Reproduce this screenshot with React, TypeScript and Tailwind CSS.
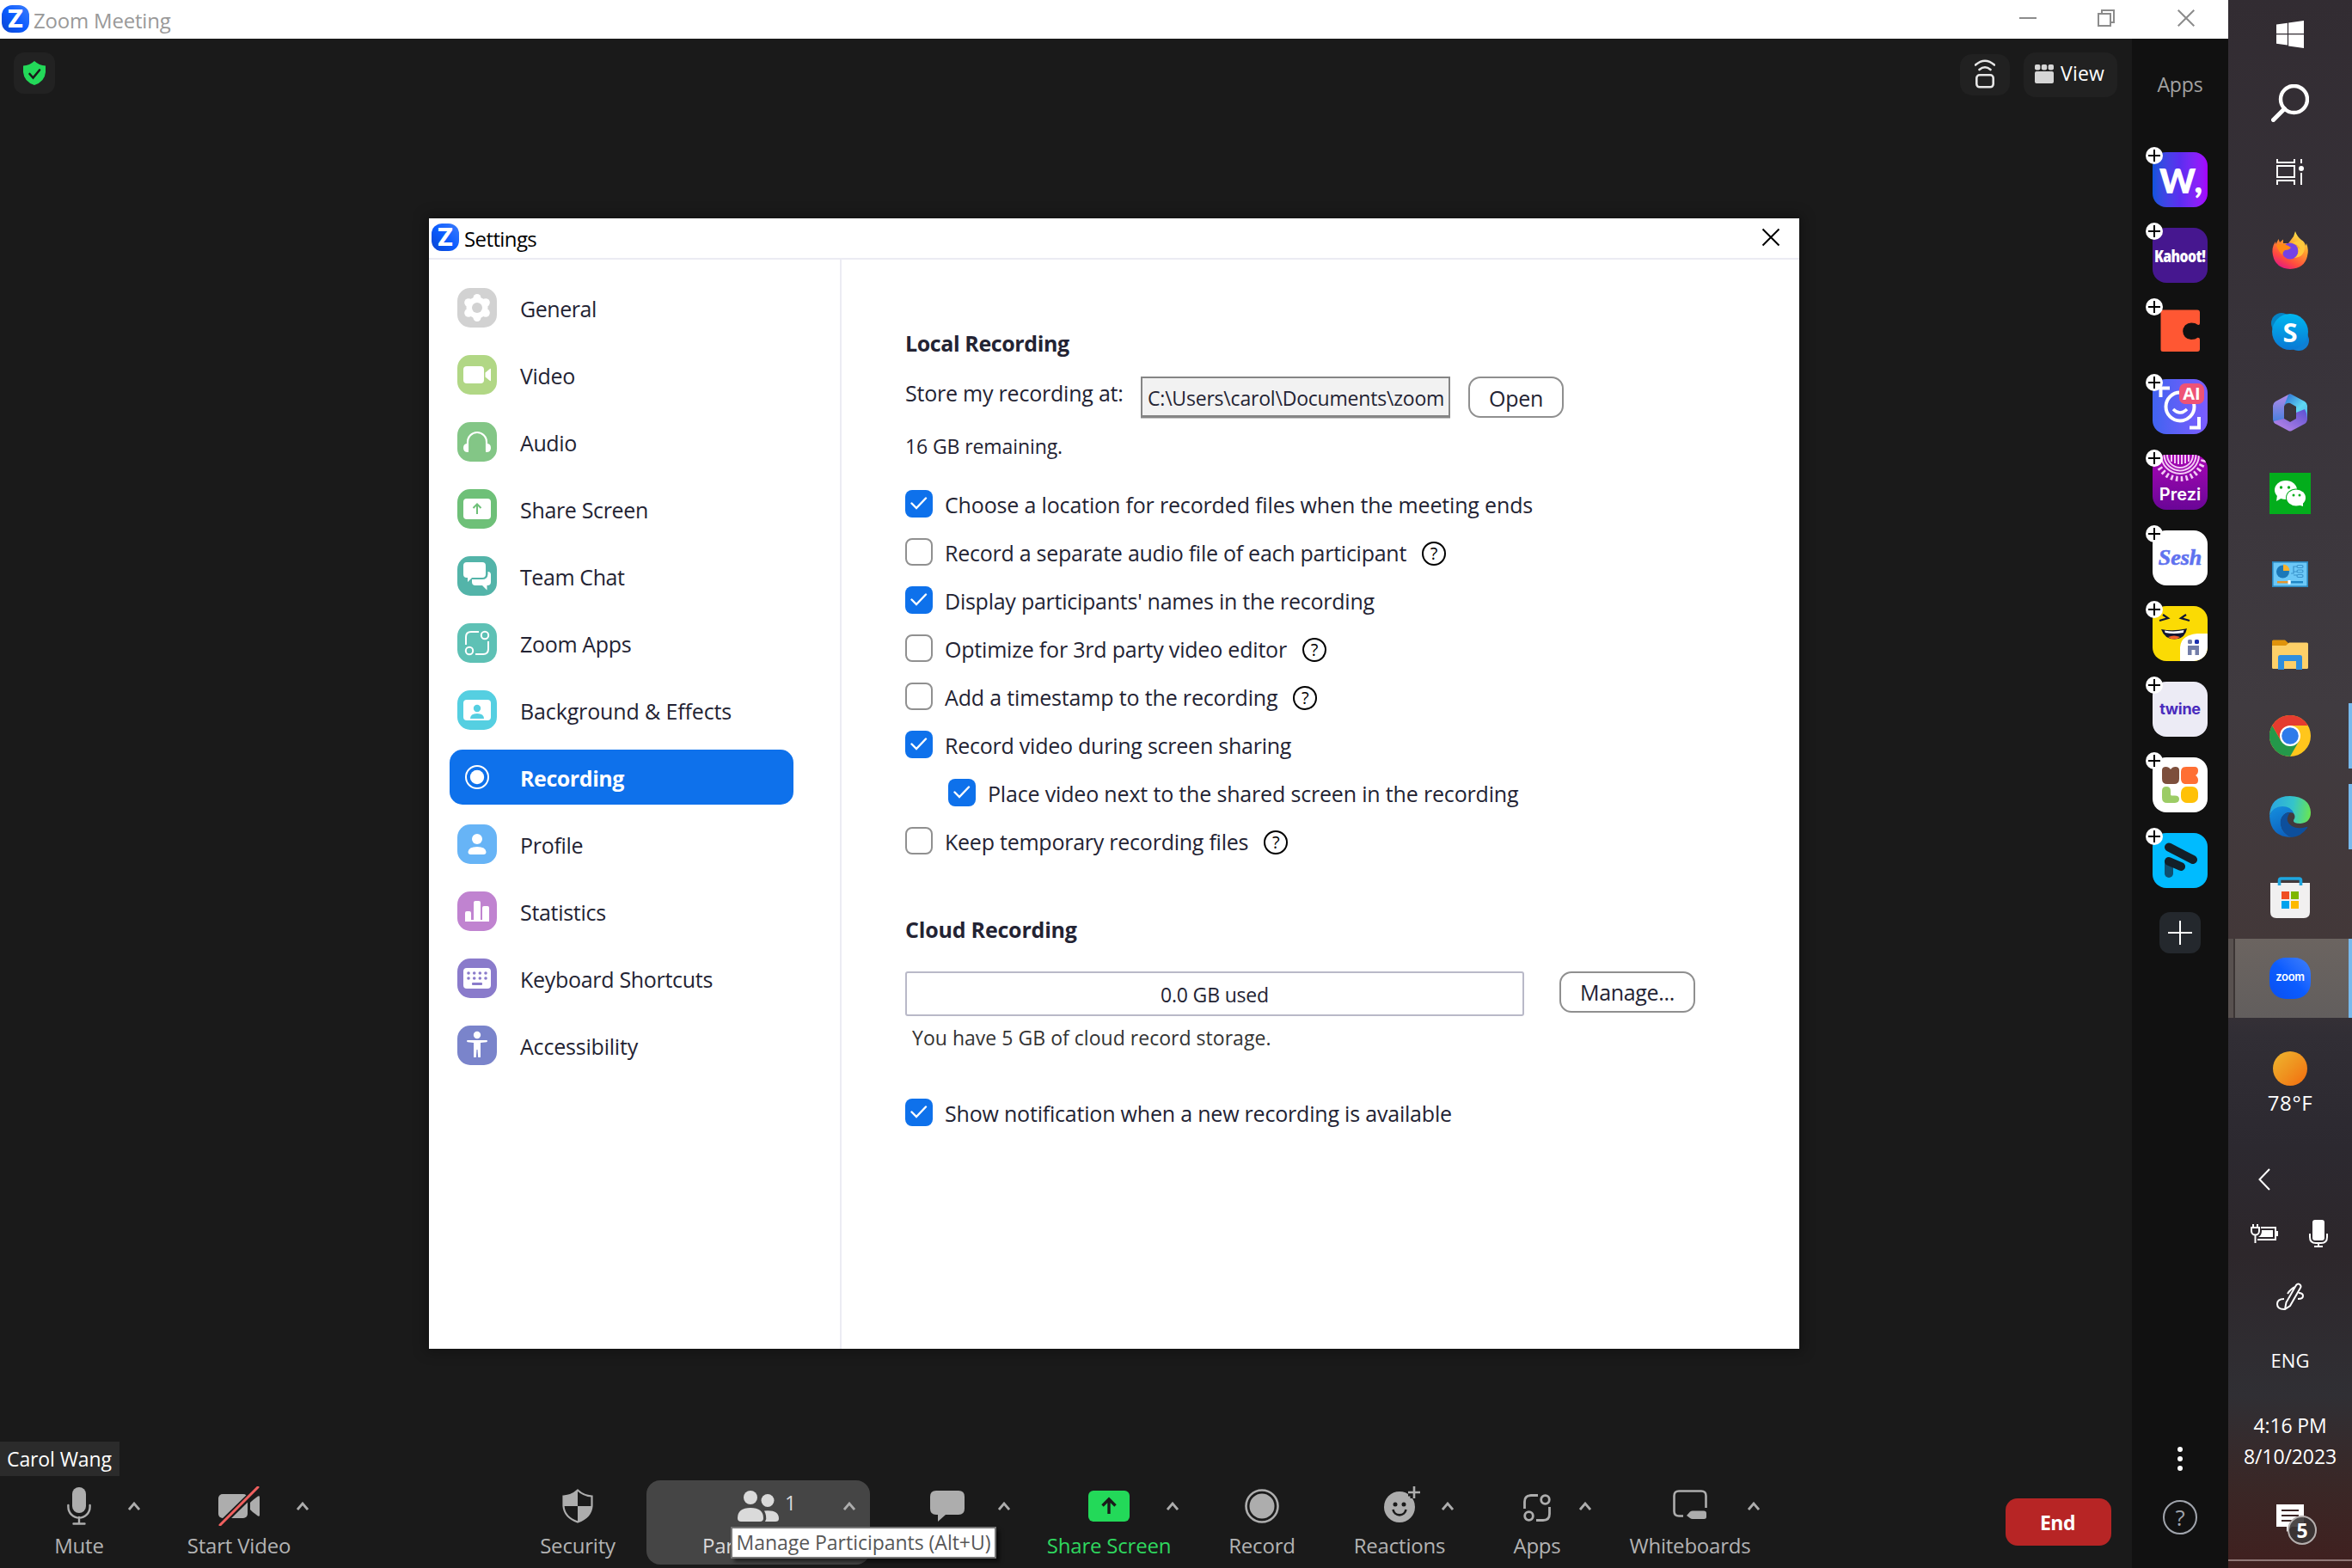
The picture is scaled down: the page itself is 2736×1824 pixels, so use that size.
import React from "react";
import type { ReactNode } from "react";

/* ---------- shared bits ---------- */

function ZoomLogo({ className = "" }: { className?: string }) {
  return (
    <div
      className={
        "flex h-8 w-8 shrink-0 items-center justify-center rounded-[12px] bg-gradient-to-bl from-[#3b7dfb] via-[#0b5cff] to-[#0a44d0] text-[28px] leading-none font-extrabold text-white [font-family:Inter,sans-serif] " +
        className
      }
    >
      Z
    </div>
  );
}

function Caret() {
  return (
    <svg width="14" height="10" viewBox="0 0 14 10" fill="none" stroke="#adadad" strokeWidth="2.8">
      <path d="M1 9 7 2 13 9" />
    </svg>
  );
}

/* ---------- settings: sidebar ---------- */

const settingsItems: { label: string; tile: string; ls: string; icon: ReactNode }[] = [
  {
    label: "General",
    tile: "bg-[#d2d2d2]",
    ls: "tracking-[-0.45px]",
    icon: (
      <>
        <g fill="#fff">
          <circle cx="23" cy="23" r="12.5" />
          <circle cx="23" cy="11.500" r="4.500" />
          <circle cx="23" cy="34.500" r="4.500" />
          <circle cx="13" cy="17" r="4.800" />
          <circle cx="33" cy="17" r="4.800" />
          <circle cx="13" cy="29" r="4.800" />
          <circle cx="33" cy="29" r="4.800" />
        </g>
        <circle cx="23" cy="23" r="6" fill="#d2d2d2" />
      </>
    ),
  },
  {
    label: "Video",
    tile: "bg-[#b1d785]",
    ls: "tracking-[-0.3px]",
    icon: (
      <g fill="#fff">
        <rect x="7" y="13" width="24" height="20" rx="4" />
        <path d="M32.500 20.500 38 16q1-.5 1 .5v13q0 1-1 .5l-5.500-4.500z" />
      </g>
    ),
  },
  {
    label: "Audio",
    tile: "bg-[#83c686]",
    ls: "tracking-[-0.4px]",
    icon: (
      <>
        <path d="M12 33V23a11 11 0 0 1 22 0v10" fill="none" stroke="#fff" strokeWidth="2.200" />
        <path d="M13 25v10q-6 .5-6-5t6-5zM33 25v10q6 .5 6-5t-6-5z" fill="#fff" />
      </>
    ),
  },
  {
    label: "Share Screen",
    tile: "bg-[#6ec078]",
    ls: "tracking-[-0.33px]",
    icon: (
      <>
        <rect x="7" y="11" width="32" height="24" rx="4" fill="#fff" />
        <path d="M23 29V18M18.500 22 23 17.500 27.500 22" fill="none" stroke="#6ec078" strokeWidth="2" />
      </>
    ),
  },
  {
    label: "Team Chat",
    tile: "bg-[#53b4a9]",
    ls: "tracking-[-0.4px]",
    icon: (
      <>
        <path d="M11 7h18q4 0 4 4v10q0 4-4 4H17l-5 5v-5h-1q-4 0-4-4V11q0-4 4-4z" fill="#fff" />
        <path d="M35.500 18q3.500 0 3.500 3.500V30q0 4-4 4h-.5v5.500L29 34h-8q-4 0-4-4v-3h12q6 0 6.500-6z" fill="#fff" />
      </>
    ),
  },
  {
    label: "Zoom Apps",
    tile: "bg-[#5ec1b5]",
    ls: "tracking-[-0.33px]",
    icon: (
      <g fill="none" stroke="#fff" strokeWidth="2">
        <path d="M10 25v-9q0-6 6-6h9M36 21v9q0 6-6 6h-9" />
        <circle cx="32" cy="14" r="4.200" />
        <circle cx="14" cy="32" r="4.200" />
      </g>
    ),
  },
  {
    label: "Background & Effects",
    tile: "bg-[#55cfe1]",
    ls: "tracking-[-0.13px]",
    icon: (
      <>
        <rect x="7" y="11" width="32" height="24" rx="4" fill="#fff" />
        <circle cx="23" cy="21" r="4.200" fill="#55cfe1" />
        <path d="M15 33q0-6 8-6t8 6z" fill="#55cfe1" />
      </>
    ),
  },
  {
    label: "Recording",
    tile: "bg-transparent",
    ls: "tracking-[-0.44px]",
    icon: (
      <>
        <circle cx="23" cy="23" r="13" fill="none" stroke="#fff" strokeWidth="2" />
        <circle cx="23" cy="23" r="8.200" fill="#fff" />
      </>
    ),
  },
  {
    label: "Profile",
    tile: "bg-[#67b4f6]",
    ls: "tracking-[-0.3px]",
    icon: (
      <g fill="#fff">
        <circle cx="23" cy="17" r="6" />
        <path d="M12.500 32q.5-6 10.500-6t10.500 6q0 3-3 3h-15q-3 0-3-3z" />
      </g>
    ),
  },
  {
    label: "Statistics",
    tile: "bg-[#c083d0]",
    ls: "tracking-[-0.3px]",
    icon: (
      <path
        d="M9 35V25q0-2 2-2h3q2 0 2 2v8h3V13q0-2 2-2h4q2 0 2 2v20h2V19q0-2 2-2h4q2 0 2 2v16z"
        fill="#fff"
      />
    ),
  },
  {
    label: "Keyboard Shortcuts",
    tile: "bg-[#8a7bcb]",
    ls: "tracking-[-0.3px]",
    icon: (
      <>
        <rect x="7" y="11" width="32" height="24" rx="4" fill="#fff" />
        <g fill="#8a7bcb">
          {[13, 19.700, 26.300, 33].map((x) => (
            <React.Fragment key={x}>
              <circle cx={x} cy="17" r="1.800" />
              <circle cx={x} cy="23" r="1.800" />
            </React.Fragment>
          ))}
          <rect x="17" y="28" width="12" height="3" rx="1" />
        </g>
      </>
    ),
  },
  {
    label: "Accessibility",
    tile: "bg-[#7a84cb]",
    ls: "tracking-[-0.2px]",
    icon: (
      <g fill="#fff">
        <circle cx="23" cy="11" r="4.200" />
        <path d="M12 17h22q1 0 1 1t-1 1.200l-7 .8v17h-2.800L23.500 28h-1L21.800 37H19V20l-7-.8q-1-.2-1-1.200t1-1z" />
      </g>
    ),
  },
];

/* ---------- settings: content ---------- */

function Checkbox({ checked }: { checked: boolean }) {
  return checked ? (
    <div className="flex h-8 w-8 shrink-0 items-center justify-center rounded-[8px] bg-[#0e71eb]">
      <svg width="20" height="16" viewBox="0 0 20 16" fill="none" stroke="#fff" strokeWidth="2.400">
        <path d="M1.500 7.500 7 13 18 1.500" strokeLinecap="round" />
      </svg>
    </div>
  ) : (
    <div className="h-8 w-8 shrink-0 rounded-[8px] border-2 border-[#909090] bg-white" />
  );
}

function Help() {
  return (
    <div className="mt-1 ml-[18px] flex h-7 w-7 items-center justify-center rounded-full border-2 border-black text-[20px] leading-none text-black">
      ?
    </div>
  );
}

const options: { text: string; on?: boolean; help?: boolean; nested?: boolean; ls: string }[] = [
  { text: "Choose a location for recorded files when the meeting ends", on: true, ls: "tracking-[-0.16px]" },
  { text: "Record a separate audio file of each participant", help: true, ls: "tracking-[-0.26px]" },
  { text: "Display participants' names in the recording", on: true, ls: "tracking-[-0.25px]" },
  { text: "Optimize for 3rd party video editor", help: true, ls: "tracking-[-0.2px]" },
  { text: "Add a timestamp to the recording", help: true, ls: "tracking-[-0.16px]" },
  { text: "Record video during screen sharing", on: true, ls: "tracking-[-0.24px]" },
  { text: "Place video next to the shared screen in the recording", on: true, nested: true, ls: "tracking-[-0.17px]" },
  { text: "Keep temporary recording files", help: true, ls: "tracking-[-0.24px]" },
];

function Option({ o }: { o: (typeof options)[number] }) {
  return (
    <div className={"flex h-14 items-center " + (o.nested ? "ml-[50px]" : "")}>
      <Checkbox checked={!!o.on} />
      <div className={"ml-[14px] pt-[1px] text-[25px] leading-9 whitespace-nowrap " + o.ls}>{o.text}</div>
      {o.help && <Help />}
    </div>
  );
}

function SettingsDialog() {
  return (
    <div className="absolute top-[254px] left-[499px] flex h-[1315px] w-[1594px] flex-col bg-white text-[#232333] shadow-[0_0_14px_4px_rgba(0,0,0,0.28)]">
      <div className="flex h-12 shrink-0 items-center border-b-2 border-[#ebebf3] pr-[22px] pl-[3px]">
        <ZoomLogo className="mb-[2px]" />
        <div className="mt-[1px] ml-[6px] text-[24px] leading-8 tracking-[-0.6px] text-black">Settings</div>
        <svg className="mt-[-2px] ml-auto" width="22" height="22" viewBox="0 0 22 22" stroke="#000" strokeWidth="2">
          <path d="M1.500 1.500 20.500 20.500M20.500 1.500 1.500 20.500" />
        </svg>
      </div>
      <div className="flex flex-1">
        <div className="flex w-[480px] flex-col gap-[14px] border-r-2 border-[#ebebf3] pt-6 pl-6">
          {settingsItems.map((it) => {
            const active = it.label === "Recording";
            return (
              <div
                key={it.label}
                className={
                  "flex h-16 w-[400px] items-center rounded-[15px] pl-[9px] " +
                  (active ? "bg-[#0e71eb] font-bold text-white" : "")
                }
              >
                <div className={"h-[46px] w-[46px] rounded-[15px] " + it.tile}>
                  <svg width="46" height="46" viewBox="0 0 46 46">
                    {it.icon}
                  </svg>
                </div>
                <div className={"ml-[27px] pt-[1px] text-[25px] leading-9 whitespace-nowrap " + it.ls}>{it.label}</div>
              </div>
            );
          })}
        </div>
        <div className="flex flex-1 flex-col pt-[79px] pl-[74px]">
          <div className="text-[25px] leading-9 font-bold tracking-[-0.4px]">Local Recording</div>
          <div className="mt-[21px] flex h-12">
            <div className="w-[274px] pt-[1px] text-[25px] leading-9 tracking-[-0.22px] whitespace-nowrap">
              Store my recording at:
            </div>
            <div className="flex h-12 w-[360px] items-center overflow-hidden border-2 border-b-[3px] border-[#858585] bg-[#f2f2f2] pt-[3px] pl-[6px] text-[23px] tracking-[-0.2px] whitespace-nowrap shadow-[0_1px_0_#c4c4c4]">
              C:\Users\carol\Documents\zoom
            </div>
            <div className="ml-[21px] flex h-12 w-[111px] items-center justify-center rounded-[14px] border-2 border-[#8f8f8f] pt-[3px] text-[25px] tracking-[-0.28px]">
              Open
            </div>
          </div>
          <div className="mt-[17px] text-[23px] leading-8 tracking-[-0.1px]">16 GB remaining.</div>
          <div className="mt-[23px] flex flex-col">
            {options.map((o) => (
              <Option key={o.text} o={o} />
            ))}
          </div>
          <div className="mt-[57px] text-[25px] leading-9 font-bold tracking-[-0.2px]">Cloud Recording</div>
          <div className="mt-[31px] flex">
            <div className="flex h-[52px] w-[720px] items-center justify-center rounded-[3px] border-2 border-[#b9b9c8] pt-[2px] text-[23px] tracking-[-0.18px]">
              0.0 GB used
            </div>
            <div className="ml-[41px] flex h-12 w-[158px] items-center justify-center rounded-[14px] border-2 border-[#8f8f8f] pt-[1px] text-[25px] tracking-[-0.32px]">
              Manage...
            </div>
          </div>
          <div className="mt-[9px] ml-2 text-[23px] leading-8 tracking-[0.03px] text-[#333]">
            You have 5 GB of cloud record storage.
          </div>
          <div className="mt-[43px]">
            <Option
              o={{ text: "Show notification when a new recording is available", on: true, ls: "tracking-[-0.2px]" }}
            />
          </div>
        </div>
      </div>
    </div>
  );
}

/* ---------- meeting toolbar ---------- */

function Tool({
  icon,
  label,
  box,
  tone = "text-[#b3b3b3]",
  caret = true,
  badge,
}: {
  icon: ReactNode;
  label?: string;
  box: string;
  tone?: string;
  caret?: boolean;
  badge?: string;
}) {
  return (
    <div className={"flex shrink-0 " + tone}>
      <div className={"flex flex-col items-center " + box}>
        <div className="relative flex h-[60px] items-center justify-center">
          {icon}
          {badge && <span className="absolute top-[10px] left-[55px] text-[23px] leading-8">{badge}</span>}
        </div>
        {label && <div className="text-[24px] leading-8 tracking-[-0.2px] whitespace-nowrap">{label}</div>}
      </div>
      {caret && (
        <div className="flex h-[60px] items-center">
          <Caret />
        </div>
      )}
    </div>
  );
}

const G = "#adadad";

function Toolbar() {
  return (
    <div className="flex h-[98px] items-start">
      <Tool
        box="ml-[35px] w-[114px]"
        label="Mute"
        icon={
          <svg width="28" height="44" viewBox="0 0 28 44" fill="none" stroke={G} strokeWidth="2.400">
            <rect x="6" y="0" width="16" height="30" rx="8" fill={G} stroke="none" />
            <path d="M1.400 21v2a12.600 12.600 0 0 0 25.200 0v-2M14 35v7M7.500 42.500h13" strokeLinecap="round" />
          </svg>
        }
      />
      <Tool
        box="ml-[48px] w-[134px]"
        label="Start Video"
        icon={
          <svg width="48" height="46" viewBox="0 0 48 46">
            <rect x="0" y="9" width="34" height="28" rx="5" fill={G} />
            <path d="M37 19q1-1.500 9-7.500 2-1 2 1v21q0 2-2 1-8-6-9-7.500z" fill={G} />
            <path d="M2 45 46 2" stroke="#1a1a1a" strokeWidth="7" />
            <path d="M2 45 46 1" stroke="#f0605f" strokeWidth="3" strokeLinecap="round" />
          </svg>
        }
      />
      <Tool
        box="ml-[253px] w-[120px]"
        label="Security"
        caret={false}
        icon={
          <svg width="36" height="40" viewBox="0 0 36 40">
            <path
              d="M18 1.500q7 6.500 16.500 7V20q-1 13-16.500 18.500Q2.500 33 1.500 20V8.500Q11 8 18 1.500z"
              fill="none"
              stroke={G}
              strokeWidth="2.200"
            />
            <path d="M18 1.500V20H1.500V8.500Q11 8 18 1.500zM18 20h16.500q-1 13-16.500 18.500z" fill={G} />
          </svg>
        }
      />
      <div className="ml-5 flex h-[98px] w-[260px] rounded-[16px] bg-[#454545] pl-[31px]">
        <Tool
          box="w-[198px]"
          label="Participants"
          badge="1"
          tone="text-[#dadada]"
          icon={
            <svg width="48" height="36" viewBox="0 0 48 36" fill="#dadada">
              <circle cx="15" cy="8" r="8" />
              <circle cx="35" cy="11.500" r="7.500" />
              <path d="M0 32Q0 20 15 20t15 12q0 4-4 4H4q-4 0-4-4z" />
              <path d="M31 23.500q17-1.500 17 9 0 3.500-4 3.500H32q2-3 1-7-.5-3-2-5.500z" />
            </svg>
          }
        />
      </div>
      <Tool
        box="ml-[31px] w-[118px]"
        icon={
          <svg width="40" height="36" viewBox="0 0 40 36" fill={G}>
            <path d="M7 0h26q7 0 7 7v14q0 7-7 7H18l-9 8v-8H7q-7 0-7-7V7q0-7 7-7z" />
          </svg>
        }
      />
      <Tool
        box="ml-[48px] w-[134px]"
        label="Share Screen"
        tone="text-[#2fd85f] tracking-tight"
        icon={
          <svg width="48" height="36" viewBox="0 0 48 36">
            <rect width="48" height="36" rx="6" fill="#23d959" />
            <path d="M24 27V11M16.500 17.500 24 10l7.500 7.500" fill="none" stroke="#1a1a1a" strokeWidth="3.400" />
          </svg>
        }
      />
      <Tool
        box="ml-[57px] w-[80px]"
        label="Record"
        caret={false}
        icon={
          <svg width="40" height="40" viewBox="0 0 40 40">
            <circle cx="20" cy="20" r="18.500" fill="none" stroke={G} strokeWidth="2.600" />
            <circle cx="20" cy="20" r="14.500" fill={G} />
          </svg>
        }
      />
      <Tool
        box="ml-[71px] w-[98px]"
        label="Reactions"
        icon={
          <svg className="mt-[-5px] ml-[6px]" width="42" height="42" viewBox="0 0 42 42">
            <circle cx="18" cy="24" r="18" fill={G} />
            <path d="M35 0v14M28 7h14" stroke="#1a1a1a" strokeWidth="9" />
            <path d="M35 0v14M28 7h14" stroke={G} strokeWidth="2.600" />
            <g fill="#1a1a1a">
              <circle cx="13" cy="21" r="2.500" />
              <circle cx="23" cy="21" r="2.500" />
            </g>
            <path d="M10.500 27a7.600 7.600 0 0 0 15 0" fill="none" stroke="#1a1a1a" strokeWidth="2.600" />
          </svg>
        }
      />
      <Tool
        box="ml-[48px] w-[98px]"
        label="Apps"
        icon={
          <svg className="mt-1" width="32" height="32" viewBox="0 0 32 32" fill="none" stroke={G} strokeWidth="2.800">
            <path d="M1.500 17V9q0-7.500 7.500-7.500h8M30.500 15v8q0 7.500-7.500 7.500h-8" />
            <circle cx="25.500" cy="6.500" r="4.800" />
            <circle cx="6.500" cy="25.500" r="4.800" />
          </svg>
        }
      />
      <Tool
        box="ml-[48px] w-[134px]"
        label="Whiteboards"
        icon={
          <svg className="mt-[-4px]" width="40" height="34" viewBox="0 0 40 34">
            <path d="M38.500 21V7q0-5.500-5.500-5.500H7Q1.500 1.500 1.500 7v18q0 5.500 5.500 5.500h5" fill="none" stroke={G} strokeWidth="2.600" />
            <path d="M16 30l4-4.500q1.500-1 3-1h13q3 0 3 3v4q0 2.500-3 2.500H23q-2 0-3-1z" fill={G} />
          </svg>
        }
      />
      <div className="mt-[21px] ml-[286px] flex h-[55px] w-[123px] items-center justify-center rounded-[14px] bg-[#b72525] pt-[1px] pr-[2px] text-[23px] font-bold tracking-[-0.5px] text-white">
        End
      </div>
    </div>
  );
}

/* ---------- Zoom apps column ---------- */

const appTiles: { name: string; tile: string; art: ReactNode }[] = [
  {
    name: "wonder",
    tile: "bg-gradient-to-r from-[#0b53dc] via-[#5b2df0] to-[#a400fd]",
    art: <span className="pt-[2px] pl-[2px] text-[40px] leading-none font-extrabold text-white [font-family:Lato,sans-serif]">W,</span>,
  },
  {
    name: "kahoot",
    tile: "bg-[#46178f]",
    art: (
      <span className="scale-x-[0.88] scale-y-[1.1] text-[18px] leading-none font-extrabold tracking-[-0.7px] text-white">
        Kahoot!
      </span>
    ),
  },
  {
    name: "coda",
    tile: "bg-transparent",
    art: (
      <svg width="64" height="64" viewBox="0 0 64 64">
        <path
          d="M12 7.500h40q3 0 3 3V23q0 2.500-2.500 1.800Q50 22.500 45 22.500a9.800 9.800 0 0 0 0 19.600q5 0 7.500-2.400Q55 39.500 55 42v11q0 3-3 3H12q-2.500 0-2.500-2.500V10q0-2.500 2.500-2.500z"
          fill="#ff5733"
        />
      </svg>
    ),
  },
  {
    name: "ai",
    tile: "bg-gradient-to-r from-[#3f63f0] to-[#7a5cff]",
    art: (
      <>
        <svg width="64" height="64" viewBox="0 0 64 64" fill="none" stroke="#fff" strokeWidth="4">
          <path d="M9.500 21V10.500H20M54 44v12.500H43" />
          <circle cx="32" cy="32" r="16.500" />
          <path d="M24 35q8 8 16 0" strokeWidth="3.500" />
        </svg>
        <span className="absolute top-[5px] right-[4px] flex h-6 w-[29px] items-center justify-center rounded-[7px] bg-[#ee5376] text-[20px] leading-none font-bold text-white">
          AI
        </span>
      </>
    ),
  },
  {
    name: "prezi",
    tile: "bg-gradient-to-b from-[#a800b4] to-[#6a0597]",
    art: (
      <>
        <svg className="absolute inset-0" width="64" height="64" viewBox="0 0 64 64" fill="none" stroke="#f3c9f5">
          <circle cx="32" cy="0" r="28" strokeWidth="6" strokeDasharray="2.600 3.200" />
          <circle cx="32" cy="0" r="22" strokeWidth="2" />
          <circle cx="32" cy="0" r="18.500" strokeWidth="2" />
          <circle cx="32" cy="0" r="15" strokeWidth="2" />
          <path d="M22 0v8M26 0v10M30 0v11M34 0v11M38 0v10M42 0v8" strokeWidth="2" />
        </svg>
        <span className="mt-[27px] text-[20px] leading-none font-semibold text-white [font-family:Inter,sans-serif]">Prezi</span>
      </>
    ),
  },
  {
    name: "sesh",
    tile: "bg-white",
    art: (
      <span className="text-[26px] leading-none font-bold text-[#5f72ef] italic [-webkit-text-stroke:0.6px_#5f72ef] [font-family:'Liberation_Serif',serif]">
        Sesh
      </span>
    ),
  },
  {
    name: "laugh",
    tile: "bg-[#fbdb04]",
    art: (
      <svg width="64" height="64" viewBox="0 0 64 64">
        <g fill="none" stroke="#111633" strokeWidth="2.200">
          <path d="M12 10l6 4-10 3M39 10l-6 4 10 3" />
        </g>
        <path d="M10 27q15 3 30-1-2 12-14.500 12.500Q14 38.500 10 27z" fill="#111633" />
        <path d="M14 28.500q11 2 22.500-.5l-.8 3q-11 2-21 0z" fill="#fff" />
        <path d="M18 36q7-3 14 0-3 2.500-7 2.500T18 36z" fill="#f0622d" />
        <path d="M32 64V48q1-14 20-16h12v16q0 16-16 16z" fill="#fff" />
        <g fill="#727da8">
          <rect x="41" y="39" width="5" height="5" rx="1.500" />
          <path d="M41 46h13v11h-4.500v-6h-4v6H41z" />
        </g>
        <rect x="49" y="39" width="5" height="5" rx="1.500" fill="#1a2fb0" />
      </svg>
    ),
  },
  {
    name: "twine",
    tile: "bg-[#ecebf5]",
    art: <span className="text-[18px] leading-none font-bold tracking-[-0.3px] text-[#4a2bbd] [font-family:Inter,sans-serif]">twine</span>,
  },
  {
    name: "blocks",
    tile: "bg-white",
    art: (
      <svg width="64" height="64" viewBox="0 0 64 64">
        <path d="M11 15q0-4 4.500-4 3.500 0 5.500 3 2-3 5.500-3 4.500 0 4.500 4v10q0 6-6 6h-8q-6 0-6-6z" fill="#7d4f3c" />
        <path d="M39 11h10q4 0 4 4.500 0 3.500-3 5.500 3 2 3 5.500 0 4.500-4 4.500H39q-6 0-6-6v-8q0-6 6-6z" fill="#ff6f33" />
        <path d="M16 34q5 0 5 5v4q0 1.500 1.500 1.500H26q5 0 5 4t-5 4.500h-9q-6 0-6-6v-8q0-5 5-5z" fill="#9ccc65" />
        <rect x="33" y="34" width="20" height="19" rx="7" fill="#ffc107" />
      </svg>
    ),
  },
  {
    name: "bars",
    tile: "bg-[#00bbff]",
    art: (
      <svg width="64" height="64" viewBox="0 0 64 64" strokeLinecap="round" strokeWidth="10" fill="none">
        <path d="M19 34v13" stroke="#0f4f70" />
        <path d="M19 33l14 6" stroke="#131f28" />
        <path d="M19 16.500 47 31" stroke="#131f28" />
      </svg>
    ),
  },
];

function AppsColumn() {
  return (
    <div className="flex w-28 shrink-0 flex-col items-center bg-[#111] pt-[37px]">
      <div className="text-[23px] leading-8 tracking-[-0.1px] text-[#a2a2a2]">Apps</div>
      <div className="mt-[63px] flex flex-col gap-6">
        {appTiles.map((a) => (
          <div key={a.name} className="relative h-16 w-16">
            <div className={"relative flex h-16 w-16 items-center justify-center overflow-hidden rounded-[16px] " + a.tile}>
              {a.art}
            </div>
            <div className="absolute -top-[6px] -left-2 h-5 w-5 rounded-full bg-white">
              <svg width="20" height="20" viewBox="0 0 20 20" stroke="#000" strokeWidth="2">
                <path d="M10 3v14M3 10h14" />
              </svg>
            </div>
          </div>
        ))}
      </div>
      <div className="mt-7 flex h-12 w-12 items-center justify-center rounded-[12px] bg-[#24282d]">
        <svg width="28" height="28" viewBox="0 0 28 28" stroke="#fff" strokeWidth="2">
          <path d="M14 0v28M0 14h28" />
        </svg>
      </div>
      <div className="mt-auto flex flex-col gap-[5px]">
        <i className="h-[6px] w-[6px] rounded-full bg-white" />
        <i className="h-[6px] w-[6px] rounded-full bg-white" />
        <i className="h-[6px] w-[6px] rounded-full bg-white" />
      </div>
      <div className="mt-[34px] mb-[39px] flex h-10 w-10 items-center justify-center rounded-full border-2 border-[#a0a4ac] text-[26px] leading-none text-[#a0a4ac]">
        ?
      </div>
    </div>
  );
}

/* ---------- Windows taskbar ---------- */

const pinned: { name: string; bar?: boolean; active?: boolean; art: ReactNode }[] = [
  {
    name: "firefox",
    art: (
      <svg className="mt-[-3px]" width="44" height="46" viewBox="0 0 44 46">
        <defs>
          <linearGradient id="ff" x1="0.800" y1="0" x2="0.250" y2="1">
            <stop offset="0" stopColor="#fff14f" />
            <stop offset="0.400" stopColor="#ff9a2e" />
            <stop offset="0.750" stopColor="#ff4a3f" />
            <stop offset="1" stopColor="#e31587" />
          </linearGradient>
        </defs>
        <path
          d="M28 1q2 6 7 10 4 2 5 7l1-3q3 8 1 15-3 14-20 15Q5 44 2 29q-2-9 3-16l.5 3 3-6 1.500 4 4-3.500V15h6L26 7z"
          fill="url(#ff)"
        />
        <circle cx="22" cy="24" r="9.500" fill="#7542e5" />
        <path d="M6 17q6-3 14 1l3 2q-2 3-7 3-3 2-2.500 6-5-4-7.500-12z" fill="#ff8a16" />
        <path d="M24 15q7 0 10 7l-3-2q2 8-4 12 12-1 12-13-1-5-5-8z" fill="#ffc83c" />
      </svg>
    ),
  },
  {
    name: "skype",
    art: (
      <div className="relative flex h-11 w-11 items-center justify-center">
        <svg className="absolute inset-0" width="44" height="44" viewBox="0 0 44 44">
          <defs>
            <linearGradient id="sk" x1="0" y1="0" x2="0" y2="1">
              <stop offset="0" stopColor="#00b7f0" />
              <stop offset="1" stopColor="#0a78d4" />
            </linearGradient>
          </defs>
          <circle cx="12" cy="12" r="12" fill="#0583c4" />
          <circle cx="32" cy="32" r="12" fill="#0f7fd4" />
          <circle cx="22" cy="22" r="21" fill="url(#sk)" />
        </svg>
        <span className="relative text-[31px] leading-none font-bold text-white">S</span>
      </div>
    ),
  },
  {
    name: "microsoft 365",
    art: (
      <svg width="40" height="44" viewBox="0 0 40 44">
        <defs>
          <linearGradient id="m1" x1="0" y1="0" x2="0" y2="1">
            <stop offset="0" stopColor="#b48be8" />
            <stop offset="1" stopColor="#3f7fdc" />
          </linearGradient>
          <linearGradient id="m2" x1="0" y1="0" x2="1" y2="1">
            <stop offset="0" stopColor="#2a6bd4" />
            <stop offset="0.600" stopColor="#5fd8f2" />
            <stop offset="1" stopColor="#4fb4ea" />
          </linearGradient>
          <linearGradient id="m3" x1="1" y1="0" x2="0" y2="1">
            <stop offset="0" stopColor="#5a4fd0" />
            <stop offset="1" stopColor="#c08bea" />
          </linearGradient>
        </defs>
        <path d="M18 1 3 9q-3 2-3 5v16q0 3 3 5l10-6V15q0-3 3-5l6-9q-2-1-4 0z" fill="url(#m1)" />
        <path d="M18 1q2-1 4 0l15 8q3 2 3 5v16l-13-8v-7L20 11q-4-1-7 3z" fill="url(#m2)" />
        <path d="M40 29q0 4-3 6l-15 8q-2 1-4 0L3 35q-2-1-2-3l12-3 7 4 7-4V22l10-4q3 5 3 11z" fill="url(#m3)" />
        <path d="M20 14.500l6.500 3.700v7.600L20 29.500l-6.500-3.700v-7.600z" fill="#3b363c" />
      </svg>
    ),
  },
  {
    name: "wechat",
    art: (
      <svg width="48" height="48" viewBox="0 0 48 48">
        <rect width="48" height="48" fill="#03ad1c" />
        <path d="M9 26l-1 7 7-4z" fill="#fff" />
        <ellipse cx="19" cy="20" rx="13" ry="11" fill="#fff" />
        <ellipse cx="31" cy="29" rx="12" ry="10.500" fill="#03ad1c" />
        <ellipse cx="31" cy="29" rx="11" ry="9.500" fill="#fff" />
        <path d="M39 34v5l-6-2z" fill="#fff" />
        <g fill="#03ad1c">
          <circle cx="13.500" cy="17" r="1.700" />
          <circle cx="22.500" cy="17" r="1.700" />
          <circle cx="28" cy="26" r="1.500" />
          <circle cx="35" cy="26" r="1.500" />
        </g>
      </svg>
    ),
  },
  {
    name: "control panel",
    art: (
      <svg width="42" height="30" viewBox="0 0 42 30">
        <rect x="0.800" y="0.800" width="40.400" height="28.400" fill="#6cc8f7" stroke="#2a86bd" strokeWidth="1.600" />
        <circle cx="12.500" cy="12" r="7.500" fill="#1c78b8" />
        <path d="M13 11V3.500a7.500 7.500 0 0 1 7.500 7.500z" fill="#f7b12c" />
        <g fill="none" stroke="#3a93cc" strokeWidth="1.200">
          <path d="M22 14h3V6h4M25 12h4M25 16h4" />
          <rect x="29" y="4.500" width="7" height="3" rx="1.500" />
          <rect x="29" y="10" width="7" height="3" rx="1.500" />
          <rect x="29" y="15.500" width="7" height="3" rx="1.500" />
        </g>
        <rect x="6" y="23" width="13" height="2.400" fill="#e8962a" />
        <rect x="22" y="23" width="14" height="2.400" fill="#1f86c4" />
        <rect x="18.500" y="22" width="3" height="4.500" fill="#fff" />
      </svg>
    ),
  },
  {
    name: "file explorer",
    art: (
      <svg width="42" height="36" viewBox="0 0 42 36">
        <path d="M0 2q0-1.500 1.500-1.500H15l5 4.500v4H0z" fill="#e0930b" />
        <path d="M0 7h16l4-3.500h20.500Q42 3.500 42 5v27.500q0 1.500-1.500 1.500h-39Q0 34 0 32.500z" fill="#fdd068" />
        <path d="M7 35V20.500q0-2.500 2.500-2.500h23q2.500 0 2.500 2.500V35h-7V25H14v10z" fill="#2f8ede" />
      </svg>
    ),
  },
  {
    name: "chrome",
    bar: true,
    art: (
      <svg width="48" height="48" viewBox="0 0 48 48">
        <circle cx="24" cy="24" r="24" fill="#ffc61c" />
        <path d="M3.200 12A24 24 0 0 0 24 48L34.400 30H13.600z" fill="#24984a" />
        <path d="M24 12h20.800A24 24 0 0 0 3.200 12L13.600 30V18z" fill="#e53c2f" />
        <circle cx="24" cy="24" r="12" fill="#fff" />
        <circle cx="24" cy="24" r="9.800" fill="#2f7bea" />
      </svg>
    ),
  },
  {
    name: "edge",
    bar: true,
    art: (
      <svg width="48" height="48" viewBox="0 0 48 48">
        <defs>
          <linearGradient id="e1" x1="0" y1="0.500" x2="1" y2="0.600">
            <stop offset="0" stopColor="#2aa5e0" />
            <stop offset="0.550" stopColor="#35c4ca" />
            <stop offset="1" stopColor="#69e552" />
          </linearGradient>
          <linearGradient id="e2" x1="0" y1="0" x2="0.400" y2="1">
            <stop offset="0" stopColor="#1590df" />
            <stop offset="1" stopColor="#0c63c0" />
          </linearGradient>
        </defs>
        <path d="M0 23Q1 0 24 0q23 1 24 19 0 12-12 13-9 0-8-4 3-4 0-8-4-7-13-7Q4 13 0 23z" fill="url(#e1)" />
        <path d="M0 23Q4 12 15 12q10 0 13 8-5-2-9 0-7 4-6 13 2 11 13 15Q1 48 0 23z" fill="url(#e2)" />
        <path d="M19 20q-7 4-6 13 2 11 13 15 11-1 18-11 1-2-1-1-10 3-17-1-8-5-4-13 1-2 3-3z" fill="#0d4f9c" />
      </svg>
    ),
  },
  {
    name: "store",
    art: (
      <svg width="46" height="48" viewBox="0 0 46 48">
        <path d="M0 7h46v34q0 7-7 7H7q-7 0-7-7z" fill="#f1f0f0" />
        <path d="M10.500 10V4q0-2 2-2h21q2 0 2 2v6" fill="none" stroke="#1ea7e1" strokeWidth="3.600" />
        <rect x="13" y="17" width="9" height="9" fill="#f04e23" />
        <rect x="24" y="17" width="9" height="9" fill="#7db700" />
        <rect x="13" y="28" width="9" height="9" fill="#00a2ed" />
        <rect x="24" y="28" width="9" height="9" fill="#fdb900" />
      </svg>
    ),
  },
  {
    name: "zoom",
    active: true,
    art: (
      <div className="flex h-12 w-12 items-center justify-center rounded-[19px] bg-gradient-to-bl from-[#3f7ffa] via-[#0b5cff] to-[#0a4ff0] pb-[2px] text-[13px] font-semibold tracking-[-0.3px] text-white [font-family:Inter,sans-serif]">
        zoom
      </div>
    ),
  },
];

function Taskbar() {
  return (
    <div className="flex h-full w-36 shrink-0 flex-col items-center bg-[linear-gradient(180deg,#322c32_0%,#38333a_22%,#403b40_45%,#433839_60%,#312e35_66%,#2c2930_73%,#2d272b_80%,#302f34_89%,#3a2726_95%,#40201f_100%)] text-white">
      <div className="flex h-20 items-center">
        <svg width="32" height="32" viewBox="0 0 32 32" fill="#fff">
          <path d="M0 4.600 12.900 2.800V15H0zM14.100 2.600 32 0v15H14.100zM0 16.200h12.900v12.300L0 26.700zM14.100 16.200H32V32l-17.900-2.600z" />
        </svg>
      </div>
      <div className="flex h-20 items-center">
        <svg width="44" height="44" viewBox="0 0 44 44" fill="none" stroke="#fff">
          <circle cx="26.500" cy="17.500" r="15.500" strokeWidth="4.400" />
          <path d="M15.500 28.500 2.500 41.500" strokeWidth="5" strokeLinecap="round" />
        </svg>
      </div>
      <div className="flex h-20 items-center">
        <svg width="32" height="32" viewBox="0 0 32 32" fill="none" stroke="#fff" strokeWidth="2">
          <path d="M1 1v4h20V1M1 31v-5h20v5M29 1v5M29 17v14" />
          <rect x="1" y="9" width="20" height="13" />
          <circle cx="29" cy="12" r="3" fill="#fff" stroke="none" />
        </svg>
      </div>
      <div className="mt-[5px] flex w-full flex-col">
        {pinned.map((p) => (
          <div key={p.name} className="flex h-[94px] w-full items-center justify-end">
            {p.active ? (
              <div className="flex h-[92px] w-full items-stretch">
                <div className="w-[6px] bg-[#58514f]" />
                <div className="w-[2px] bg-[#3c3635]" />
                <div className="flex w-[132px] items-center justify-center bg-gradient-to-b from-[#6b6460] to-[#625e5d] pr-[4px]">
                  {p.art}
                </div>
                <div className="w-1 bg-[#76b9ed]" />
              </div>
            ) : (
              <>
                <div className="flex flex-1 justify-center pl-1">{p.art}</div>
                <div className={"w-1 " + (p.bar ? "h-[76px] bg-[#76b9ed]" : "")} />
              </>
            )}
          </div>
        ))}
      </div>
      <div className="mt-[38px] h-10 w-10 rounded-full bg-gradient-to-br from-[#eeb62f] via-[#ef931f] to-[#f2690c]" />
      <div className="mt-[4px] text-[24px] leading-8 tracking-[0.6px]">78°F</div>
      <div className="mt-[53px] flex h-10 w-full items-center pl-[35px]">
        <svg width="14" height="26" viewBox="0 0 14 26" fill="none" stroke="#fff" strokeWidth="2">
          <path d="M13 1 1.500 13 13 25" />
        </svg>
      </div>
      <div className="mt-[23px] flex h-10 w-full items-center pr-7 pl-[26px]">
        <svg width="32" height="22" viewBox="0 0 32 22" fill="none" stroke="#fff" strokeWidth="2">
          <path d="M12 4h17v14H8" />
          <path d="M1 4v4a4.500 4.500 0 0 0 9 0V4zM3 0v4M8 0v4M5.500 12v10" />
          <path d="M13 7h13v8H9q4-2 4-7zM30 8h2v6h-2z" fill="#fff" stroke="none" />
        </svg>
        <svg className="ml-auto" width="22" height="32" viewBox="0 0 22 32" fill="none" stroke="#fff" strokeWidth="2">
          <rect x="4" y="0" width="14" height="24" rx="3" fill="#fff" stroke="none" />
          <path d="M1 16v4q0 7 7 7h6q7 0 7-7v-4M11 27v4M6 31h10" />
        </svg>
      </div>
      <div className="mt-[33px] flex h-10 items-center">
        <svg width="32" height="32" viewBox="0 0 32 32" fill="none" stroke="#fff" strokeWidth="2">
          <path d="M9 19q-8 0-8 6t8 6M26 12q5 0 5 3.500T25 19" />
          <path d="M10 31l1.500-8L23 3q2.500-3 5 0 1 1.500 0 3L16 27zM22 5q-5 2-9 8" />
        </svg>
      </div>
      <div className="mt-[38px] text-[22px] leading-8 tracking-[0px]">ENG</div>
      <div className="mt-[42px] text-[23px] leading-9 tracking-[-0.14px]">4:16 PM</div>
      <div className="text-[23px] leading-9 tracking-[-0.1px]">8/10/2023</div>
      <div className="relative mt-[38px] h-8 w-8">
        <svg width="32" height="32" viewBox="0 0 32 32">
          <path d="M0 0h32v26H18l-6 6v-6H0z" fill="#fff" />
          <path d="M6 7h20M6 13h20M6 19h14" stroke="#3b2424" strokeWidth="2" />
        </svg>
        <div className="absolute top-[13px] left-[13px] flex h-[34px] w-[34px] items-center justify-center rounded-full border-2 border-[#b5afae] bg-[#3a3535]/90 text-[23px] leading-none font-bold">
          5
        </div>
      </div>
      <div className="mt-8 h-[2px] w-full bg-[#8f7776]" />
    </div>
  );
}

/* ---------- page ---------- */

export default function App() {
  return (
    <div className="relative flex h-[1824px] w-[2736px] overflow-hidden bg-[#1a1a1a] [font-family:'Open_Sans','Noto_Sans',sans-serif]">
      <div className="flex w-[2592px] shrink-0 flex-col">
        <div className="flex h-[45px] shrink-0 items-center bg-white pr-[39px] pl-[2px]">
          <ZoomLogo className="mb-[1px]" />
          <div className="mt-[2px] ml-[5px] text-[24px] leading-8 tracking-[-0.2px] text-[#999]">Zoom Meeting</div>
          <div className="mb-[3px] ml-auto flex items-center text-[#8c8c8c]">
            <svg width="20" height="20" viewBox="0 0 20 20" stroke="currentColor" strokeWidth="2">
              <path d="M0 10h20" />
            </svg>
            <svg className="ml-[71px]" width="20" height="20" viewBox="0 0 20 20" fill="none" stroke="currentColor" strokeWidth="2">
              <path d="M1 5h14v14H1zM5 5V1h14v14h-4" />
            </svg>
            <svg className="ml-[73px]" width="20" height="20" viewBox="0 0 20 20" stroke="currentColor" strokeWidth="2">
              <path d="M.7.7 19.300 19.300M19.300.7.7 19.300" />
            </svg>
          </div>
        </div>
        <div className="flex flex-1">
          <div className="flex w-[2480px] flex-col">
            <div className="flex items-start pt-4 pr-[17px] pl-4">
              <div className="flex h-12 w-12 items-center justify-center rounded-[12px] bg-[#222]">
                <svg width="26" height="28" viewBox="0 0 26 28">
                  <path d="M13 0q5.500 5 13 5.500V13q-1 11-13 15Q1 24 0 13V5.500Q7.500 5 13 0z" fill="#23d959" />
                  <path d="M7.500 15l4 4.500 7.500-9" fill="none" stroke="#1a1a1a" strokeWidth="2.600" strokeLinecap="round" />
                </svg>
              </div>
              <div className="mt-[2px] ml-auto flex h-12 w-[58px] items-center justify-center rounded-[14px] bg-[#212121]">
                <svg className="mb-[3px]" width="24" height="34" viewBox="0 0 24 34" fill="none" stroke="#e6e6e6" strokeWidth="2.600">
                  <rect x="2.300" y="18.300" width="19.400" height="14" rx="3.500" />
                  <path d="M1 6.500q11-9.500 22 0M5.500 12q6.500-5.500 13 0" strokeLinecap="round" />
                </svg>
              </div>
              <div className="ml-4 flex h-[52px] w-[109px] items-center rounded-[14px] bg-[#212121] pl-[13px]">
                <svg className="mb-[3px]" width="22" height="22" viewBox="0 0 22 22" fill="#d6d6d6">
                  <rect x="0" y="0" width="6.400" height="6.400" rx="1.800" />
                  <rect x="7.800" y="0" width="6.400" height="6.400" rx="1.800" />
                  <rect x="15.600" y="0" width="6.400" height="6.400" rx="1.800" />
                  <rect x="0" y="8" width="22" height="14" rx="2" />
                </svg>
                <span className="mb-[5px] ml-2 text-[23px] leading-8 tracking-[0.2px] text-white">View</span>
              </div>
            </div>
            <div className="mt-auto flex h-10 w-[139px] items-center bg-[#2b2b2b] pt-[1px] pl-2 text-[23px] tracking-[-0.1px] whitespace-nowrap text-white">
              Carol Wang
            </div>
            <div className="mt-[5px] mb-1">
              <Toolbar />
            </div>
          </div>
          <AppsColumn />
        </div>
      </div>
      <Taskbar />
      <SettingsDialog />
      <div className="absolute top-[1776px] left-[850px] flex h-[37px] w-[309px] items-center justify-center border-2 border-[#767676] bg-white text-[23px] tracking-[-0.03px] whitespace-nowrap text-[#575757] shadow-[4px_4px_4px_rgba(0,0,0,0.5)]">
        Manage Participants (Alt+U)
      </div>
    </div>
  );
}
